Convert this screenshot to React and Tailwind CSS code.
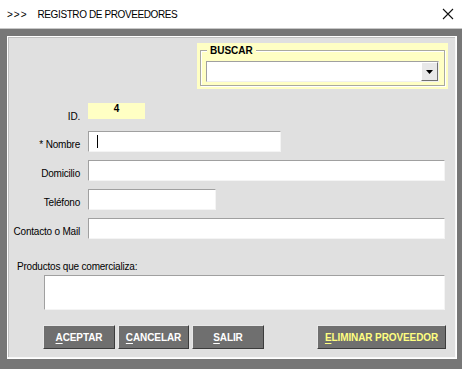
import React from 'react';

const font = { fontFamily: '"Liberation Sans", Arial, sans-serif' };

const Field = ({ className = '' }) => (
  <div
    className={`h-[21px] bg-white border border-t-[#a0a0a0] border-l-[#a0a0a0] border-b-[#f4f4f4] border-r-[#f4f4f4] ${className}`}
  />
);

const Row = ({ label, children, className = '', labelClass = 'pb-[1px]' }) => (
  <div className={`flex items-end ${className}`}>
    <div className={`w-[71px] shrink-0 text-right text-[10px] leading-[13px] text-black whitespace-nowrap tracking-[-0.2px] ${labelClass}`}>{label}</div>
    <div className="ml-[8px] flex-1 flex">{children}</div>
  </div>
);

const Btn = ({ hot, rest, width, yellow }) => (
  <button
    className={`h-[24px] ${width} bg-[#6f6f6f] border border-t-[#e8e8e8] border-l-[#e8e8e8] border-b-[#3c3c3c] border-r-[#3c3c3c] text-[10px] font-bold whitespace-nowrap tracking-[-0.1px] ${yellow ? 'text-[#ffff80]' : 'text-white'}`}
  >
    <span className="underline underline-offset-[2px] decoration-1">{hot}</span>
    {rest}
  </button>
);

export default function App() {
  return (
    <div className="w-[462px] h-[369px] bg-[#777777] flex flex-col overflow-hidden" style={font}>
      {/* title bar */}
      <div className="h-[29px] bg-white border-b border-[#c8c8c8] flex items-center pl-[7px] pr-[8px] shrink-0">
        <span className="text-[10px] text-black tracking-[1px]">&gt;&gt;&gt;</span>
        <span className="ml-[10px] text-[10px] text-black tracking-[-0.4px]">REGISTRO DE PROVEEDORES</span>
        <svg className="ml-auto" width="12" height="12" viewBox="0 0 12 12">
          <path d="M1 1 L11 11 M11 1 L1 11" stroke="#111" strokeWidth="1.1" />
        </svg>
      </div>

      {/* panel */}
      <div className="mt-[7px] ml-[7px] w-[450px] h-[323px] bg-[#e0e0e0] border border-white shadow-[inset_-1px_-1px_0_#f8f8f8,inset_1px_1px_0_#c0c0c0] flex flex-col px-[1px]">
        {/* buscar */}
        <div className="mt-[6px] ml-[188px] w-[251px] h-[46px] bg-[#ffffc4] pt-[7px] px-[3px]">
          <div className="relative h-[36px] border border-[#a9a9a0] shadow-[1px_1px_0_#ffffff,inset_1px_1px_0_#ffffff] px-[5px] pt-[10px]">
            <span className="absolute -top-[7px] left-[6px] px-[3px] bg-[#ffffc4] text-[10px] leading-[13px] font-bold text-black">BUSCAR</span>
            <div className="h-[21px] bg-white border border-t-[#a0a0a0] border-l-[#a0a0a0] border-b-[#f0f0f0] border-r-[#f0f0f0] flex justify-end">
              <div className="w-[17px] h-full bg-[#e8e8e8] border border-t-white border-l-white border-b-[#707070] border-r-[#707070] flex items-center justify-center">
                <svg width="7" height="4" viewBox="0 0 7 4"><path d="M0 0 H7 L3.5 4 Z" fill="#000" /></svg>
              </div>
            </div>
          </div>
        </div>

        {/* id */}
        <Row label="ID." className="mt-[14px] h-[20px]" labelClass="pb-0">
          <div className="w-[57px] h-[16px] bg-[#ffffc4] text-center text-[10px] leading-[12px] font-bold text-black mb-[4px]">4</div>
        </Row>

        <div className="mt-[8px] flex flex-col gap-[8px] pr-[10px]">
          <Row label="* Nombre">
            <div className="w-[193px] h-[21px] bg-white border border-t-[#a0a0a0] border-l-[#a0a0a0] border-b-[#f4f4f4] border-r-[#f4f4f4] flex items-center pl-[8px]">
              <div className="w-[1px] h-[13px] bg-black" />
            </div>
          </Row>
          <Row label="Domicilio">
            <Field className="flex-1" />
          </Row>
          <Row label="Teléfono">
            <Field className="w-[128px]" />
          </Row>
          <Row label="Contacto o Mail">
            <Field className="flex-1" />
          </Row>
        </div>

        <div className="mt-[21px] ml-[8px] text-[10px] leading-[13px] text-black tracking-[-0.2px]">Productos que comercializa:</div>
        <div className="mt-[2px] ml-[35px] mr-[10px] h-[35px] bg-white border border-t-[#a0a0a0] border-l-[#a0a0a0] border-b-[#f4f4f4] border-r-[#f4f4f4]" />

        <div className="mt-[15px] ml-[34px] mr-[9px] flex gap-[3px]">
          <Btn hot="A" rest="CEPTAR" width="w-[72px]" />
          <Btn hot="C" rest="ANCELAR" width="w-[71px]" />
          <Btn hot="S" rest="ALIR" width="w-[72px]" />
          <div className="flex-1" />
          <Btn hot="E" rest="LIMINAR PROVEEDOR" width="w-[129px]" yellow />
        </div>
      </div>
    </div>
  );
}
